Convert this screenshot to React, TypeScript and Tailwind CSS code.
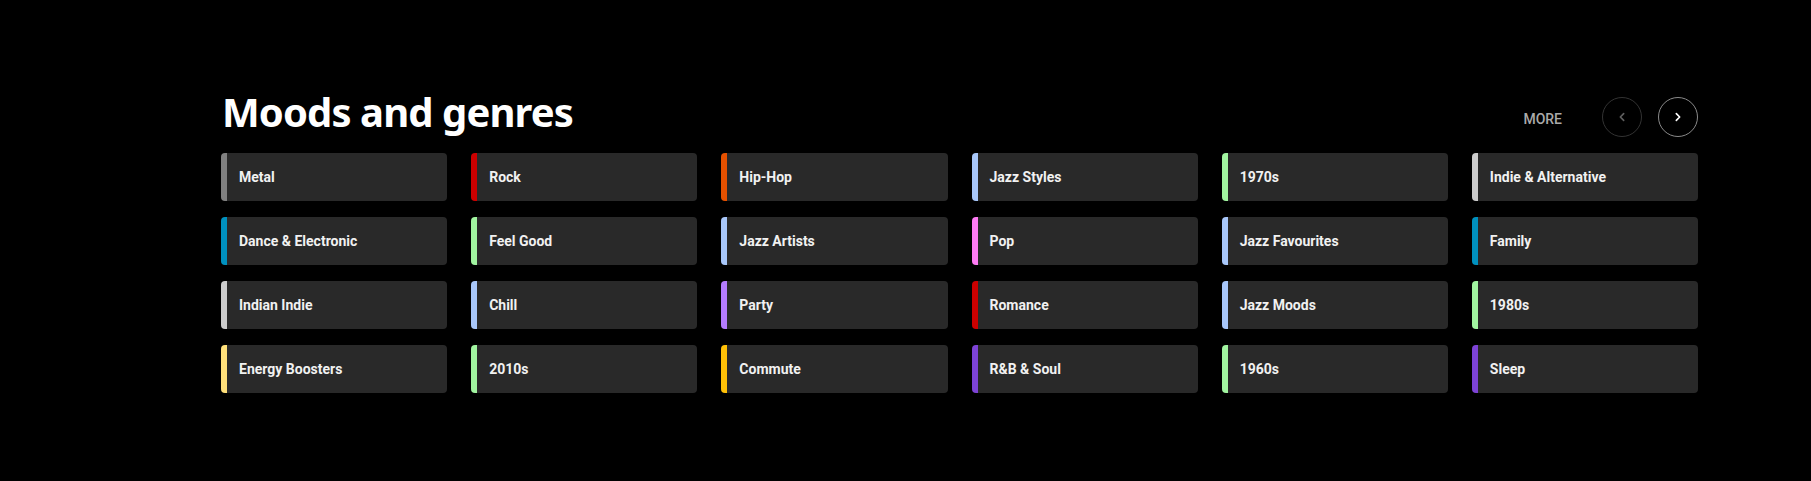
import React from "react";

const items: [string, string][] = [
  ["Metal", "#808080"],
  ["Rock", "#cc0000"],
  ["Hip-Hop", "#e65100"],
  ["Jazz Styles", "#a8c7fa"],
  ["1970s", "#a1f5a0"],
  ["Indie & Alternative", "#cccccc"],
  ["Dance & Electronic", "#0091bf"],
  ["Feel Good", "#a1f5a0"],
  ["Jazz Artists", "#a8c7fa"],
  ["Pop", "#ff7bf5"],
  ["Jazz Favourites", "#a8c7fa"],
  ["Family", "#0091bf"],
  ["Indian Indie", "#cccccc"],
  ["Chill", "#a8c7fa"],
  ["Party", "#b57cff"],
  ["Romance", "#cc0000"],
  ["Jazz Moods", "#a8c7fa"],
  ["1980s", "#a1f5a0"],
  ["Energy Boosters", "#ffe07a"],
  ["2010s", "#a1f5a0"],
  ["Commute", "#ffc107"],
  ["R&B & Soul", "#7d43d6"],
  ["1960s", "#a1f5a0"],
  ["Sleep", "#7d43d6"],
];

export default function App() {
  return (
    <div className="w-[1811px] h-[481px] bg-black overflow-hidden" style={{ fontFamily: "Roboto, 'Noto Sans', sans-serif" }}>
      <div className="ml-[221px] w-[1477px] pt-[89px]">
        <div className="flex items-center justify-between h-[56px]">
          <h2 className="text-white font-bold text-[40px] leading-none mb-[10px] ml-[1px] font-['Noto_Sans',sans-serif] tracking-[-0.9px]">
            Moods and genres
          </h2>
          <div className="flex items-center">
            <span className="text-[#aaaaaa] text-[14px] font-medium mr-[40px] mt-[4px]">MORE</span>
            <button className="w-[40px] h-[40px] rounded-full border border-[#333333] flex items-center justify-center mr-[16px]">
              <svg width="16" height="16" viewBox="0 0 24 24" fill="none" stroke="#5f5f5f" strokeWidth="2.5" strokeLinecap="round" strokeLinejoin="round">
                <path d="M14.5 7l-5 5 5 5" />
              </svg>
            </button>
            <button className="w-[40px] h-[40px] rounded-full border border-[#8a8a8a] flex items-center justify-center">
              <svg width="16" height="16" viewBox="0 0 24 24" fill="none" stroke="#ffffff" strokeWidth="2.5" strokeLinecap="round" strokeLinejoin="round">
                <path d="M9.5 7l5 5-5 5" />
              </svg>
            </button>
          </div>
        </div>
        <div className="grid grid-cols-6 gap-x-[24px] gap-y-[16px] mt-[8px]">
          {items.map(([label, color]) => (
            <div
              key={label}
              className="h-[48px] rounded-[4px] bg-[#292929] border-l-[6px] flex items-center pl-[12px]"
              style={{ borderLeftColor: color }}
            >
              <span className="text-[#f1f1f1] text-[14px] font-bold">{label}</span>
            </div>
          ))}
        </div>
      </div>
    </div>
  );
}
